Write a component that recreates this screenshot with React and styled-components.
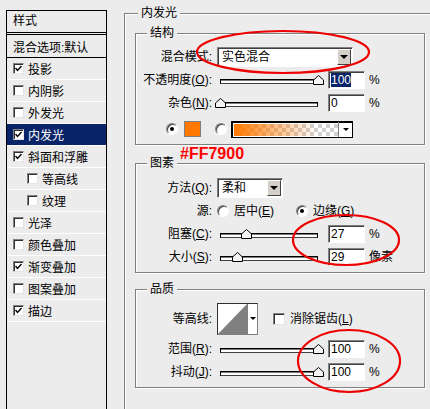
import styled, { createGlobalStyle } from 'styled-components';

const GlobalStyle = createGlobalStyle`
  html, body {
    margin: 0;
    padding: 0;
    background: #ececec;
  }
  body {
    width: 430px;
    height: 409px;
    overflow: hidden;
    font-family: 'Liberation Sans', 'Noto Sans CJK SC', sans-serif;
    font-size: 12px;
    color: #000;
  }
`;

const Dialog = styled.div`
    position: relative;
    display: flex;
    align-items: flex-start;
    width: 430px;
    height: 409px;
    overflow: hidden;
    background: #ececec;
`;

/* ---------- left style list ---------- */

const StyleList = styled.div`
    box-sizing: border-box;
    flex: none;
    margin: 10px 0 0 6px;
    width: 101px;
    height: 420px;
    border: 1px solid #000;
    background: #ececec;
`;

const ListHeader = styled.div`
    height: 21px;
    line-height: 21px;
    padding-left: 6px;
    border-bottom: 3px double #000;
`;

const ListItem = styled.div`
    display: flex;
    align-items: center;
    gap: 4px;
    height: ${(p) => (p.$tall ? 22 : 21)}px;
    padding-left: ${(p) => (p.$indent ? 20 : 6)}px;
    border-bottom: 1px solid ${(p) => (p.$dark ? '#000' : '#fff')};
    background: ${(p) => (p.$selected ? '#0a246a' : 'transparent')};
    color: ${(p) => (p.$selected ? '#fff' : '#000')};
    white-space: nowrap;
`;

const CheckBox = styled.span`
    box-sizing: border-box;
    flex: none;
    display: flex;
    align-items: center;
    justify-content: center;
    width: ${(p) => p.$size || 11}px;
    height: ${(p) => p.$size || 11}px;
    margin-left: ${(p) => p.$ml || 0}px;
    background: #fff;
    border: 1px solid;
    border-color: #808080 #e4e4e4 #e4e4e4 #808080;
    box-shadow: inset 1px 1px 0 #303030;
`;

function Check({ checked, size, ml }) {
    return (
        <CheckBox $size={size} $ml={ml}>
            {checked && (
                <svg width="7" height="7" viewBox="0 0 7 7">
                    <polyline points="0.5,3 2.5,5.5 6.5,1" fill="none" stroke="#000" strokeWidth="1.4" />
                </svg>
            )}
        </CheckBox>
    );
}

const styleItems = [
    { label: '投影', checked: true },
    { label: '内阴影' },
    { label: '外发光' },
    { label: '内发光', checked: true, selected: true },
    { label: '斜面和浮雕', checked: true },
    { label: '等高线', indent: true },
    { label: '纹理', indent: true },
    { label: '光泽' },
    { label: '颜色叠加' },
    { label: '渐变叠加', checked: true },
    { label: '图案叠加' },
    { label: '描边', checked: true },
];

/* ---------- right panel ---------- */

const Main = styled.div`
    box-sizing: border-box;
    position: relative;
    flex: none;
    margin: 13px 0 0 17px;
    width: 320px;
    height: 420px;
    padding: 19px 0 0 10px;
    border-top: 1px solid #808080;
    border-left: 1px solid #808080;
    box-shadow: inset 1px 1px 0 #fff;
`;

const Group = styled.div`
    box-sizing: border-box;
    position: relative;
    display: flex;
    flex-direction: column;
    width: 290px;
    height: ${(p) => p.$h}px;
    margin-top: ${(p) => p.$mt || 0}px;
    padding-top: ${(p) => p.$pt}px;
    border: 1px solid #808080;
    box-shadow: inset 1px 1px 0 #fff, 1px 1px 0 #fff;
`;

const Legend = styled.span`
    position: absolute;
    top: -8px;
    left: ${(p) => p.$left || 11}px;
    padding: 0 3px;
    line-height: 15px;
    background: #ececec;
`;

const Row = styled.div`
    display: flex;
    align-items: center;
    height: ${(p) => p.$h || 23}px;
    margin-top: ${(p) => p.$mt || 0}px;
    padding-left: ${(p) => p.$pl || 0}px;
    white-space: nowrap;
`;

const Label = styled.span`
    flex: none;
    width: 76px;
    margin-right: 5px;
    text-align: right;
    line-height: 16px;
`;

const Select = styled.div`
    box-sizing: border-box;
    flex: none;
    display: flex;
    align-items: center;
    width: ${(p) => p.$w}px;
    height: 20px;
    padding: 0 1px 0 4px;
    background: #fff;
    border: 1px solid;
    border-color: #808080 #fff #fff #808080;
    box-shadow: inset 1px 1px 0 #404040;
`;

const SelectText = styled.span`
    flex: 1;
    line-height: 16px;
`;

const DropButton = styled.span`
    box-sizing: border-box;
    display: flex;
    align-items: center;
    justify-content: center;
    width: 14px;
    height: 16px;
    background: #d4d0c8;
    border: 1px solid;
    border-color: #fff #404040 #404040 #fff;
`;

const Arrow = styled.span`
    width: 0;
    height: 0;
    border-left: 4px solid transparent;
    border-right: 4px solid transparent;
    border-top: 4px solid #000;
`;

const SliderBox = styled.div`
    position: relative;
    flex: none;
    width: 108px;
    height: 16px;
`;

const Track = styled.div`
    box-sizing: border-box;
    position: absolute;
    left: 3px;
    top: 7px;
    width: 98px;
    height: 5px;
    background: #fff;
    border: 1px solid #000;
    border-bottom-color: #404040;
    box-shadow: inset 0 1px 0 #7a7a7a;
`;

const Thumb = styled.svg`
    position: absolute;
    top: 3px;
`;

function Slider({ value }) {
    return (
        <SliderBox>
            <Track />
            <Thumb width="11" height="10" viewBox="0 0 11 10" style={{ left: 3 + value * 98 - 5.5 }}>
                <polygon points="0.5,9.5 0.5,5 5.5,0.5 10.5,5 10.5,9.5" fill="#f4f4f4" stroke="#000" />
            </Thumb>
        </SliderBox>
    );
}

const NumberBox = styled.div`
    box-sizing: border-box;
    flex: none;
    width: 37px;
    height: 18px;
    margin-left: 3px;
    padding-left: 2px;
    background: #fff;
    border: 1px solid;
    border-color: #808080 #fff #fff #808080;
    box-shadow: inset 1px 1px 0 #404040;
    font-family: 'Liberation Sans', sans-serif;
    line-height: 16px;
`;

const Highlight = styled.span`
    background: #0a246a;
    color: #fff;
`;

const Unit = styled.span`
    margin-left: 4px;
    line-height: 16px;
`;

const Radio = styled.span`
    box-sizing: border-box;
    flex: none;
    display: flex;
    align-items: center;
    justify-content: center;
    width: 12px;
    height: 12px;
    margin-left: ${(p) => p.$ml || 0}px;
    border-radius: 50%;
    background: #fff;
    border: 1px solid;
    border-color: #808080 #fff #fff #808080;
    box-shadow: inset 1px 1px 0 #404040;
    &::after {
        content: '';
        width: 4px;
        height: 4px;
        border-radius: 50%;
        background: ${(p) => (p.$on ? '#000' : 'transparent')};
    }
`;

const RadioText = styled.span`
    margin-left: ${(p) => p.$gap || 5}px;
    line-height: 16px;
`;

const Swatch = styled.span`
    box-sizing: border-box;
    flex: none;
    width: 17px;
    height: 16px;
    margin: 0 14px 0 6px;
    background: #ff7900;
    border: 1px solid #808080;
`;

const GradientPicker = styled.div`
    box-sizing: border-box;
    flex: none;
    display: flex;
    width: 122px;
    height: 17px;
    margin-left: 4px;
    border: 1px solid #000;
    box-shadow: inset 1px 1px 0 #000;
    background: #fff;
`;

const GradientFill = styled.span`
    flex: 1;
    margin: 2px 0 1px 2px;
    background:
        linear-gradient(to right, #ff7900, rgba(255, 121, 0, 0.55) 35%, rgba(255, 121, 0, 0) 80%),
        repeating-conic-gradient(#d0d0d0 0 25%, #fff 0 50%) 0 0 / 8px 8px;
`;

const GradientArrow = styled.span`
    display: flex;
    align-items: center;
    justify-content: center;
    width: 13px;
    border-left: 1px solid #808080;
`;

const ContourPicker = styled.div`
    box-sizing: border-box;
    flex: none;
    display: flex;
    width: 41px;
    height: 32px;
    background: #fff;
    border: 1px solid;
    border-color: #303030 #808080 #808080 #303030;
`;

const ContourArrow = styled.span`
    flex: 1;
    display: flex;
    align-items: center;
    justify-content: center;
    border-left: 1px solid #808080;
`;

const SmallArrow = styled(Arrow)`
    border-left-width: 3px;
    border-right-width: 3px;
    border-top-width: 3px;
`;

/* ---------- annotations drawn over the screenshot ---------- */

const Marks = styled.svg`
    position: absolute;
    left: 0;
    top: 0;
    pointer-events: none;
`;

const ColorNote = styled.div`
    position: absolute;
    left: 180px;
    top: 145px;
    font-family: 'Liberation Sans', sans-serif;
    font-size: 16px;
    font-weight: bold;
    line-height: 18px;
    color: #ff0000;
`;

export default function App() {
    return (
        <>
            <GlobalStyle />
            <Dialog>
                <StyleList>
                    <ListHeader>样式</ListHeader>
                    <ListItem $tall $dark>混合选项:默认</ListItem>
                    {styleItems.map((item) => (
                        <ListItem key={item.label} $indent={item.indent} $selected={item.selected}>
                            <Check checked={item.checked} />
                            {item.label}
                        </ListItem>
                    ))}
                </StyleList>

                <Main>
                    <Legend $left={13}>内发光</Legend>

                    <Group $h={112} $pt={12}>
                        <Legend>结构</Legend>
                        <Row $h={22}>
                            <Label>混合模式:</Label>
                            <Select $w={136}>
                                <SelectText>实色混合</SelectText>
                                <DropButton><Arrow /></DropButton>
                            </Select>
                        </Row>
                        <Row>
                            <Label>不透明度(<u>O</u>):</Label>
                            <Slider value={1} />
                            <NumberBox><Highlight>100</Highlight></NumberBox>
                            <Unit>%</Unit>
                        </Row>
                        <Row>
                            <Label>杂色(<u>N</u>):</Label>
                            <Slider value={0} />
                            <NumberBox>0</NumberBox>
                            <Unit>%</Unit>
                        </Row>
                        <Row $h={24} $mt={3} $pl={30}>
                            <Radio $on />
                            <Swatch />
                            <Radio />
                            <GradientPicker>
                                <GradientFill />
                                <GradientArrow><SmallArrow /></GradientArrow>
                            </GradientPicker>
                        </Row>
                    </Group>

                    <Group $h={110} $mt={18} $pt={13}>
                        <Legend>图素</Legend>
                        <Row $h={22}>
                            <Label>方法(<u>Q</u>):</Label>
                            <Select $w={66}>
                                <SelectText>柔和</SelectText>
                                <DropButton><Arrow /></DropButton>
                            </Select>
                        </Row>
                        <Row>
                            <Label>源:</Label>
                            <Radio />
                            <RadioText>居中(<u>E</u>)</RadioText>
                            <Radio $on $ml={22} />
                            <RadioText>边缘(<u>G</u>)</RadioText>
                        </Row>
                        <Row>
                            <Label>阻塞(<u>C</u>):</Label>
                            <Slider value={0.27} />
                            <NumberBox>27</NumberBox>
                            <Unit>%</Unit>
                        </Row>
                        <Row>
                            <Label>大小(<u>S</u>):</Label>
                            <Slider value={0.175} />
                            <NumberBox>29</NumberBox>
                            <Unit>像素</Unit>
                        </Row>
                    </Group>

                    <Group $h={99} $mt={16} $pt={12}>
                        <Legend>品质</Legend>
                        <Row $h={33}>
                            <Label>等高线:</Label>
                            <ContourPicker>
                                <svg width="29" height="30" viewBox="0 0 29 30">
                                    <polygon points="0,30 29,0 29,30" fill="#808080" />
                                </svg>
                                <ContourArrow><SmallArrow /></ContourArrow>
                            </ContourPicker>
                            <Check size={12} ml={15} />
                            <RadioText $gap={5}>消除锯齿(<u>L</u>)</RadioText>
                        </Row>
                        <Row $mt={2}>
                            <Label>范围(<u>R</u>):</Label>
                            <Slider value={1} />
                            <NumberBox>100</NumberBox>
                            <Unit>%</Unit>
                        </Row>
                        <Row>
                            <Label>抖动(<u>J</u>):</Label>
                            <Slider value={1} />
                            <NumberBox>100</NumberBox>
                            <Unit>%</Unit>
                        </Row>
                    </Group>
                </Main>

                <ColorNote>#FF7900</ColorNote>
                <Marks width="430" height="409" viewBox="0 0 430 409">
                    <g fill="none" stroke="#ee0000" strokeWidth="2.2">
                        <ellipse cx="283" cy="52" rx="86" ry="21" />
                        <ellipse cx="346" cy="240" rx="53" ry="25" />
                        <ellipse cx="349" cy="361" rx="51" ry="31" />
                    </g>
                </Marks>
            </Dialog>
        </>
    );
}
